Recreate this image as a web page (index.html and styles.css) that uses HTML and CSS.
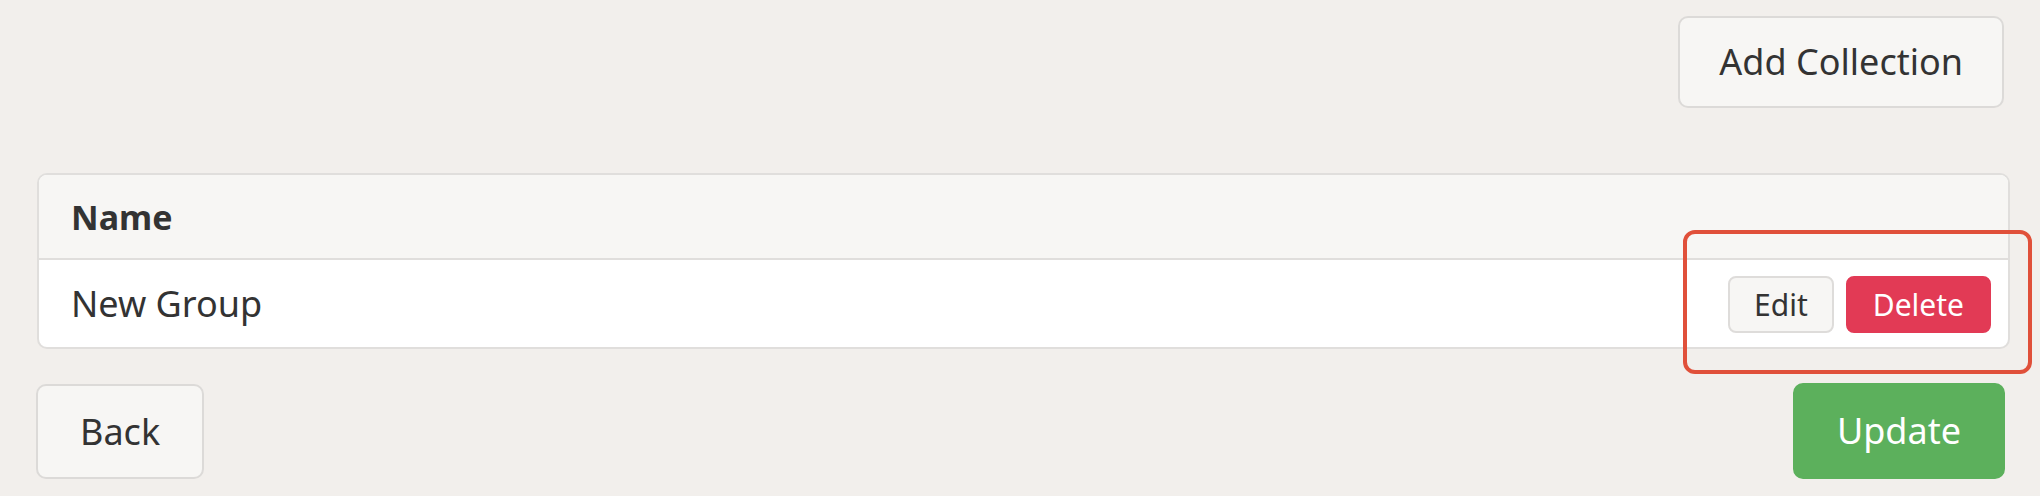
FILE: index.html
```html
<!DOCTYPE html>
<html>
<head>
<meta charset="utf-8">
<link rel="stylesheet" href="styles.css">
</head>
<body>
<div class="page">
  <div class="toolbar">
    <button class="btn btn-default">Add Collection</button>
  </div>
  <div class="card">
    <div class="row head"><div class="cell">Name</div></div>
    <div class="row body">
      <div class="cell">New Group</div>
      <div class="actions">
        <button class="btn-sm btn-light">Edit</button>
        <button class="btn-sm btn-danger">Delete</button>
      </div>
    </div>
  </div>
  <div class="footer">
    <button class="btn btn-default back">Back</button>
    <button class="btn btn-success update">Update</button>
  </div>
  <div class="highlight"></div>
</div>
</body>
</html>
```
FILE: styles.css
```css
html, body {
  margin: 0;
  padding: 0;
  background: #f2efec;
}
body {
  font-family: "Noto Sans", "Open Sans", sans-serif;
  color: #333;
}
.page {
  position: relative;
  width: 2040px;
  height: 496px;
  padding-top: 16px;
  box-sizing: border-box;
}
.toolbar {
  display: flex;
  justify-content: flex-end;
  padding-right: 36px;
}
.btn {
  font-family: inherit;
  font-size: 36px;
  line-height: 50px;
  padding: 19px 39px;
  border: 2px solid #dcdad8;
  border-radius: 10px;
  background: #f7f6f4;
  color: #333;
  cursor: pointer;
}
.card {
  margin: 65px 30px 0 37px;
  border: 2px solid #e0dedc;
  border-radius: 10px;
  background: #fff;
  overflow: hidden;
}
.row {
  display: flex;
  align-items: center;
  padding: 0 17px 0 32px;
}
.head {
  height: 83px;
  background: #f7f6f4;
  border-bottom: 2px solid #e0dedc;
  font-weight: 700;
}
.head .cell {
  font-size: 34px;
}
.body {
  height: 87px;
  font-size: 36px;
  justify-content: space-between;
}
.actions {
  display: flex;
  gap: 12px;
  margin-top: 2px;
}
.btn-sm {
  font-family: inherit;
  font-size: 30px;
  line-height: 41px;
  padding: 6px 24px;
  border: 2px solid #dedcda;
  border-radius: 8px;
  cursor: pointer;
}
.btn-light {
  background: #f7f6f4;
  color: #333;
}
.btn-danger {
  background: #e23a55;
  border-color: #e23a55;
  color: #fff;
  padding: 6px 25px;
}
.footer {
  display: flex;
  justify-content: space-between;
  margin: 35px 35px 0 36px;
}
.back {
  padding: 20px 42px;
}
.update {
  padding: 21px 42px;
  margin-top: -1px;
  background: #5cb05c;
  border-color: #5cb05c;
  color: #fff;
}
.highlight {
  position: absolute;
  left: 1683px;
  top: 230px;
  width: 341px;
  height: 136px;
  border: 4px solid #e0503a;
  border-radius: 12px;
}
```
